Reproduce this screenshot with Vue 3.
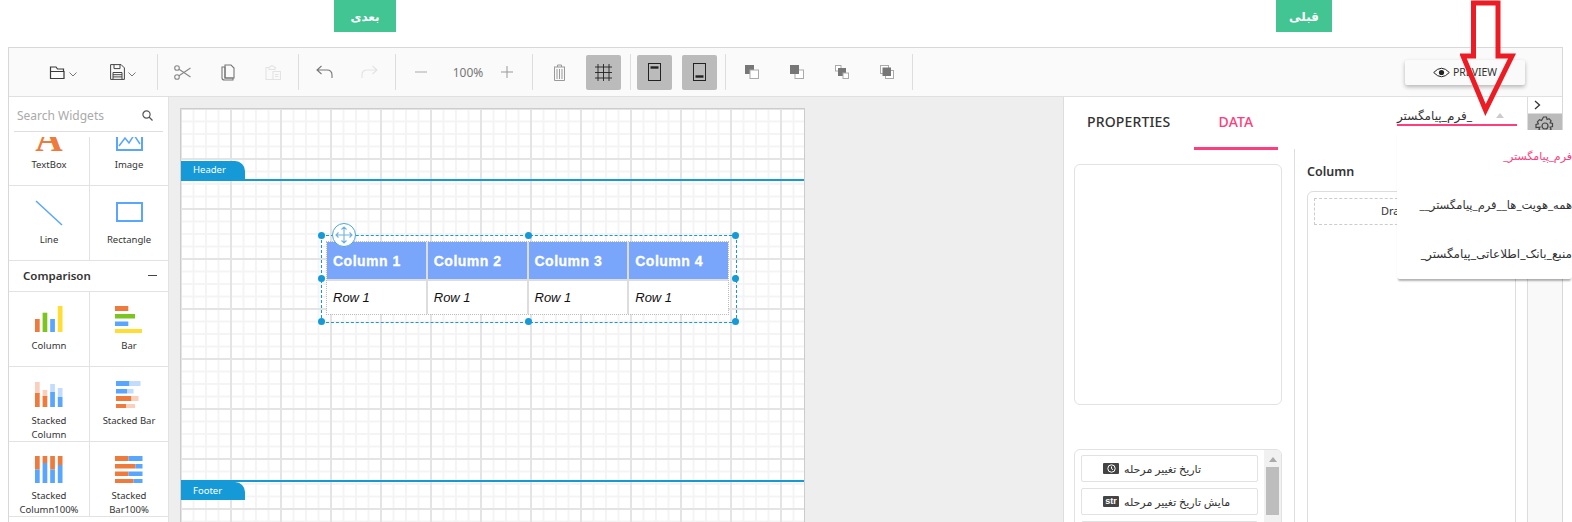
<script setup>
const O = '#ee7b3c', B = '#58a6ff', G = '#7cc520', Y = '#ffdd33', LO = '#f8d0bb', LB = '#c2dcff'
const r = (x, y, w, h, f) => ({ x, y, w, h, f })
const comparison = [
  { lines: ['Column'], w: 28, h: 26, rects: [r(0,13,4.7,13,O), r(7.6,6.7,4.7,19.3,G), r(15.2,13,4.7,13,B), r(22.8,0,4.7,26,Y)] },
  { lines: ['Bar'], w: 28, h: 27, rects: [r(0,0,13.3,5,O), r(0,8,20,4.5,G), r(0,15.5,13.3,4.5,B), r(0,23,27,4,Y)] },
  { lines: ['Stacked', 'Column'], w: 28, h: 26, rects: [r(0,1,4.7,12,LO), r(0,12,4.7,14,O), r(7.6,9,4.7,7,LO), r(7.6,15,4.7,11,O), r(15.2,3,4.7,8,LB), r(15.2,11,4.7,15,B), r(22.8,7,4.7,9,LB), r(22.8,16,4.7,10,B)] },
  { lines: ['Stacked Bar'], w: 26, h: 27, rects: [r(0,0,13.5,5,B), r(13.5,0,11,5,LB), r(0,8,11,4.5,B), r(11,8,6.5,4.5,LB), r(0,15,15.5,5,O), r(15.5,15,7,5,LO), r(0,23,10,4.5,O), r(10,23,9,4.5,LO)] },
  { lines: ['Stacked', 'Column100%'], w: 28, h: 27, rects: [r(0,0,4.7,13.5,O), r(0,13.5,4.7,13.5,B), r(7.6,0,4.7,7,O), r(7.6,7,4.7,20,B), r(15.2,0,4.7,13.5,O), r(15.2,13.5,4.7,13.5,B), r(22.8,0,4.7,9,O), r(22.8,9,4.7,18,B)] },
  { lines: ['Stacked', 'Bar100%'], w: 28, h: 27, rects: [r(0,0,13.5,5,O), r(13.5,0,14,5,B), r(0,8,20.5,4.5,O), r(20.5,8,7,4.5,B), r(0,15.5,13.5,4.5,O), r(13.5,15.5,14,4.5,B), r(0,23,18.5,4,O), r(18.5,23,9,4,B)] }
]
const columns = ['Column 1', 'Column 2', 'Column 3', 'Column 4']
const handles = [[0,0],[50,0],[100,0],[0,50],[100,50],[0,100],[50,100],[100,100]]
const handleStyle = ([x, y]) => ({ left: x + '%', top: y + '%' })
const stackIcons = ['front', 'back', 'forward', 'backward']
</script>

<template>
  <div class="page">
    <div class="nav">
      <div class="nav-btn next">بعدی</div>
      <div class="nav-btn prev">قبلی</div>
    </div>

    <div class="frame">
      <div class="toolbar">
        <div class="group g1">
          <button class="tool wide">
            <svg width="17" height="15" viewBox="0 0 17 15" fill="none" stroke="#3a3a3a" stroke-width="1.2"><path d="M1.500 13.500V2h5.500l1.500 2h6v2M1.500 6.500h13.500v7H1.500z"/></svg>
            <svg class="chev" width="8" height="5" viewBox="0 0 8 5" fill="none" stroke="#777"><path d="M.5.5 4 4 7.500.5"/></svg>
          </button>
          <button class="tool wide">
            <svg width="15" height="16" viewBox="0 0 15 16" fill="none" stroke="#444" stroke-width="1"><path d="M.6.6h10.500l3.300 3.300v11.500H.6z"/><path d="M4 .6v4h6v-4M3 8.500h9v7M3 8.500v7M3 10.700h9M3 12.900h9"/></svg>
            <svg class="chev" width="8" height="5" viewBox="0 0 8 5" fill="none" stroke="#777"><path d="M.5.5 4 4 7.500.5"/></svg>
          </button>
        </div>
        <i class="sep"></i>
        <div class="group g2">
          <button class="tool">
            <svg width="17" height="15" viewBox="0 0 17 15" fill="none" stroke="#888" stroke-width="1.100"><circle cx="3" cy="3" r="2.300"/><circle cx="3" cy="12" r="2.300"/><path d="M5 4.200 16.500 12M5 10.800 16.500 3"/></svg>
          </button>
          <button class="tool">
            <svg width="14" height="17" viewBox="0 0 14 17" fill="none" stroke="#777" stroke-width="1.100"><path d="M1 3h3v11h8v2H3.500Q1 16 1 14z"/><path d="M4 1h6l3 3v10H4z"/></svg>
          </button>
          <button class="tool">
            <svg width="16" height="15" viewBox="0 0 16 15" fill="none" stroke="#e3e3e3" stroke-width="1.100"><path d="M4 2.500H1v12h7M11 2.500h-1M4 2.500 7 .6l3 1.900v2H4zM8 6.500h7.500v8H8zM10 9.500h3.500M10 11.500h3.500"/></svg>
          </button>
        </div>
        <i class="sep"></i>
        <div class="group g3">
          <button class="tool">
            <svg width="17" height="14" viewBox="0 0 17 14" fill="none" stroke="#777" stroke-width="1.100"><path d="M5.500 1 1 5l4.500 4M1 5h10q5 0 5 5v3"/></svg>
          </button>
          <button class="tool">
            <svg width="17" height="14" viewBox="0 0 17 14" fill="none" stroke="#e3e3e3" stroke-width="1.100"><path d="M11.500 1 16 5l-4.500 4M16 5H6q-5 0-5 5v3"/></svg>
          </button>
        </div>
        <i class="sep"></i>
        <div class="group g4">
          <button class="tool minus">
            <svg width="12" height="2" viewBox="0 0 12 2"><path d="M0 1h12" stroke="#aaa"/></svg>
          </button>
          <span class="zoom-val">100%</span>
          <button class="tool plus">
            <svg width="12" height="12" viewBox="0 0 12 12" stroke="#999"><path d="M0 6h12M6 0v12" fill="none"/></svg>
          </button>
        </div>
        <i class="sep"></i>
        <div class="group g5">
          <button class="tool trash">
            <svg width="13" height="17" viewBox="0 0 13 17" fill="none" stroke="#999" stroke-width="1"><path d="M1 3h11M1.500 3v13.500h10V3M4.500 3V1h4v2M4 5v10M6.500 5v10M9 5v10"/></svg>
          </button>
          <button class="tool sq">
            <svg width="17" height="17" viewBox="0 0 17 17" fill="none" stroke="#222" stroke-width=".9"><path d="M0 3h17M0 8.500h17M0 14h17M3 0v17M8.500 0v17M14 0v17"/></svg>
          </button>
        </div>
        <i class="sep"></i>
        <div class="group g6">
          <button class="tool sq">
            <svg width="13" height="18" viewBox="0 0 13 18" fill="none" stroke="#222"><rect x=".5" y=".5" width="12" height="17"/><path d="M2.500 4.500h8" stroke-width="2.400"/></svg>
          </button>
          <button class="tool sq">
            <svg width="13" height="18" viewBox="0 0 13 18" fill="none" stroke="#222"><rect x=".5" y=".5" width="12" height="17"/><path d="M2.500 13.500h8" stroke-width="2.400"/></svg>
          </button>
        </div>
        <i class="sep"></i>
        <div class="group g7">
          <button v-for="k in stackIcons" :key="k" class="tool">
            <svg width="14" height="14" viewBox="0 0 14 14">
              <template v-if="k === 'front'"><rect x="0" y="0" width="9" height="9" fill="#777"/><rect x="5" y="5" width="8.500" height="8.500" fill="#fff" stroke="#aaa"/></template>
              <template v-else-if="k === 'back'"><rect x="5" y="5" width="8.500" height="8.500" fill="#fff" stroke="#aaa"/><rect x="0" y="0" width="9" height="9" fill="#777"/></template>
              <template v-else-if="k === 'forward'"><rect x=".5" y=".5" width="5.500" height="5.500" fill="#fff" stroke="#aaa"/><rect x="3" y="3" width="8" height="8" fill="#777"/><rect x="8" y="8" width="5.500" height="5.500" fill="#fff" stroke="#aaa"/></template>
              <template v-else><rect x=".5" y=".5" width="8" height="8" fill="#fff" stroke="#aaa"/><rect x="5.500" y="5.500" width="8" height="8" fill="#fff" stroke="#aaa"/><rect x="2.500" y="2.500" width="8.500" height="8.500" fill="#777"/></template>
            </svg>
          </button>
        </div>
        <i class="sep"></i>
        <button class="preview">
          <svg width="17" height="11" viewBox="0 0 17 11"><path d="M.7 5.500Q8.500-3 16.300 5.500 8.500 14 .7 5.500z" fill="none" stroke="#222"/><circle cx="8.500" cy="5.500" r="2.600" fill="#222"/></svg>
          <span>PREVIEW</span>
        </button>
      </div>

      <div class="main">
        <aside class="sidebar">
          <div class="search">
            <span>Search Widgets</span>
            <svg width="11" height="11" viewBox="0 0 11 11" fill="none" stroke="#555" stroke-width="1.200"><circle cx="4.500" cy="4.500" r="3.600"/><path d="m7 7 3.500 3.500"/></svg>
          </div>
          <div class="scroller">
            <div class="scroll-inner">
              <div class="cells">
                <div class="cell">
                  <div class="icon-a">A</div>
                  <div class="cell-label">TextBox</div>
                </div>
                <div class="cell">
                  <svg class="icon" width="27" height="26" viewBox="0 0 27 26" fill="none"><path d="M1 1v24h25V1" stroke="#58a6ff" stroke-width="2"/><path d="M3 21 9 13l4 5 5-8 6 9" stroke="#58a6ff" stroke-width="1.500"/><circle cx="20" cy="9" r="2.500" fill="#ee7b3c"/></svg>
                  <div class="cell-label">Image</div>
                </div>
                <div class="cell">
                  <svg class="icon" width="28" height="26" viewBox="0 0 28 26"><path d="M1 1 27 25" stroke="#58a6ff" stroke-width="1.500"/></svg>
                  <div class="cell-label">Line</div>
                </div>
                <div class="cell">
                  <svg class="icon" width="27" height="26" viewBox="0 0 27 26" fill="none"><rect x="1" y="3" width="25" height="18" stroke="#58a6ff" stroke-width="2"/></svg>
                  <div class="cell-label">Rectangle</div>
                </div>
              </div>
              <div class="cat"><span>Comparison</span><i></i></div>
              <div class="cells">
                <div v-for="c in comparison" :key="c.lines.join()" class="cell">
                  <div class="icon-box">
                    <svg :width="c.w" :height="c.h" :viewBox="`0 0 ${c.w} ${c.h}`"><rect v-for="(q, i) in c.rects" :key="i" :x="q.x" :y="q.y" :width="q.w" :height="q.h" :fill="q.f"/></svg>
                  </div>
                  <div v-for="l in c.lines" :key="l" class="cell-label">{{ l }}</div>
                </div>
              </div>
            </div>
          </div>
        </aside>

        <section class="canvas">
          <div class="paper">
            <div class="band head"><span class="band-tab">Header</span></div>
            <div class="band-body">
              <div class="selection">
                <div class="rtable">
                  <div v-for="c in columns" :key="c" class="th">{{ c }}</div>
                  <div v-for="c in columns" :key="c + 'r'" class="td">Row 1</div>
                </div>
                <i v-for="(h, i) in handles" :key="i" class="handle" :style="handleStyle(h)"></i>
                <div class="move">
                  <svg width="18" height="18" viewBox="0 0 18 18" fill="none" stroke="#6fb1dd" stroke-width="1.100"><path d="M1 9h16M9 1v16M3.500 6.500 1 9l2.500 2.500M14.500 6.500 17 9l-2.500 2.500M6.500 3.500 9 1l2.500 2.500M6.500 14.500 9 17l2.500-2.500"/></svg>
                </div>
              </div>
            </div>
            <div class="band foot"><span class="band-tab">Footer</span></div>
          </div>
        </section>

        <section class="panel">
          <div class="tabs">
            <div class="tab props">PROPERTIES</div>
            <div class="tab data">DATA</div>
            <div class="select">
              <span dir="rtl">_فرم_پیامگستر</span>
              <svg width="8" height="5" viewBox="0 0 8 5"><path d="M0 5 4 0l4 5z" fill="#ccc"/></svg>
            </div>
          </div>
          <div class="panes">
            <div class="pane-left">
              <div class="tree"></div>
              <div class="fields">
                <div class="field-list">
                  <div class="field">
                    <span class="badge"><svg width="9" height="9" viewBox="0 0 9 9" fill="none" stroke="#fff"><circle cx="4.500" cy="4.500" r="3.700"/><path d="M4.500 2.500v2.200l1.500 1"/></svg></span>
                    <span dir="rtl">تاریخ تغییر مرحله</span>
                  </div>
                  <div class="field">
                    <span class="badge">str</span>
                    <span dir="rtl">مایش تاریخ تغییر مرحله</span>
                  </div>
                  <div class="field"></div>
                </div>
                <div class="scrollbar"><i class="up"></i><i class="thumb"></i></div>
              </div>
            </div>
            <div class="pane-right">
              <div class="col-title">Column</div>
              <div class="col-box"><div class="drop">Dra</div></div>
            </div>
          </div>
        </section>

        <aside class="rail">
          <div class="rail-top">
            <svg width="7" height="10" viewBox="0 0 7 10" fill="none" stroke="#333" stroke-width="1.300"><path d="m1 1 4.500 4L1 9"/></svg>
          </div>
          <div class="rail-gear">
            <svg width="20" height="20" viewBox="0 0 20 20" fill="none" stroke="#444" stroke-width="1.200"><circle cx="10" cy="10" r="3"/><path d="M8.500 1h3l.5 2.500 2-.8 2.100 2.100-1 2 2.400.700v3l-2.400.700 1 2-2.100 2.100-2-1-.5 2.600h-3l-.5-2.600-2 1-2.100-2.100 1-2L1 11.500v-3l2.400-.7-1-2 2.100-2.100 2 .8z"/></svg>
          </div>
        </aside>
      </div>
    </div>

    <div class="popup" dir="rtl">
      <div class="opt active">فرم_پیامگستر_</div>
      <div class="opt tight">همه_هویت_ها__فرم_پیامگستر__</div>
      <div class="opt">منبع_بانک_اطلاعاتی_پیامگستر_</div>
    </div>

    <svg class="arrow" width="56" height="116" viewBox="0 0 56 116" fill="none">
      <path d="M13.500 3h24.500v53h14L25.500 110 3 56h10.500z" stroke="#ed1c24" stroke-width="5"/>
    </svg>
  </div>
</template>

<style>
html, body { margin: 0; overflow: hidden; background: #fff; }
</style>

<style scoped>
.page { position: relative; width: 1572px; height: 522px; overflow: hidden; background: #fff; font-family: "Noto Sans", "DejaVu Sans", sans-serif; color: #333; }
.nav { display: flex; justify-content: space-between; height: 32px; padding: 0 240px 0 334px; }
.nav-btn { height: 32px; background: #43c593; color: #fff; font-size: 12px; font-weight: 700; display: flex; align-items: center; justify-content: center; }
.next { width: 62px; }
.prev { width: 56px; }

.frame { margin: 15px 9px 0 8px; height: 475px; border: 1px solid #d8d8d8; border-bottom: 0; display: flex; flex-direction: column; }
.toolbar { height: 48px; flex: none; background: #fafafa; border-bottom: 1px solid #e0e0e0; display: flex; align-items: center; }
.group { display: flex; align-items: center; height: 36px; }
.sep { width: 1px; height: 36px; background: #ddd; flex: none; }
.tool { border: 0; background: none; padding: 0; width: 45px; height: 35px; display: flex; align-items: center; justify-content: center; flex: none; }
.tool.wide { width: 60px; gap: 3px; }
.chev { margin-top: 5px; }
.g1 { width: 148px; padding-left: 24px; box-sizing: border-box; }
.g2 { width: 140px; padding-left: 2px; box-sizing: border-box; }
.g3 { width: 96px; padding-left: 3px; box-sizing: border-box; }
.g4 { width: 136px; padding-left: 10px; box-sizing: border-box; }
.g5 { width: 97px; padding-left: 3px; box-sizing: border-box; gap: 4px; }
.g6 { width: 94px; padding-left: 6px; box-sizing: border-box; gap: 10px; }
.g7 { width: 186px; padding-left: 3px; box-sizing: border-box; }
.tool.minus { width: 30px; }
.tool.plus { width: 14px; }
.zoom-val { width: 64px; text-align: center; font-size: 12px; color: #777; }
.tool.trash { width: 46px; }
.tool.sq { width: 35px; background: #bbb; border-radius: 2px; }
.preview { margin-left: auto; margin-right: 37px; width: 120px; height: 25px; background: #fafafa; border: 0; border-radius: 2px; box-shadow: 0 2px 4px rgba(0, 0, 0, .28); display: flex; align-items: center; justify-content: center; gap: 3px; font: 10.500px "Noto Sans", sans-serif; color: #333; }

.main { flex: 1; display: flex; min-height: 0; }
.sidebar { width: 160px; flex: none; box-sizing: border-box; border-right: 1px solid #e2e2e2; background: #fff; display: flex; flex-direction: column; }
.search { height: 35px; margin: 0 5px 5px; padding: 3px 10px 0 3px; box-sizing: border-box; border-bottom: 1px solid #ddd; flex: none; display: flex; align-items: center; justify-content: space-between; font-size: 12px; color: #aaa; }
.scroller { flex: 1; overflow: hidden; }
.scroll-inner { margin-top: -26px; }
.cells { display: grid; grid-template-columns: 81px 78px; }
.cell { height: 75px; box-sizing: border-box; border-bottom: 1px solid #e2e2e2; padding-top: 14px; display: flex; flex-direction: column; align-items: center; overflow: hidden; }
.cell:nth-child(odd) { border-right: 1px solid #e2e2e2; }
.icon, .icon-box { height: 26px; flex: none; margin-bottom: 7px; display: block; }
.icon-box { height: 27px; margin-bottom: 6px; }
.icon-box svg { display: block; }
.icon-a { height: 26px; margin-bottom: 7px; font: 700 38px/26px "Liberation Serif", serif; color: #ee7b3c; }
.cell-label { font-size: 9.500px; line-height: 14px; color: #333; white-space: nowrap; }
.cat { height: 31px; box-sizing: border-box; border-bottom: 1px solid #e2e2e2; padding: 0 11px 2px 14px; display: flex; align-items: center; justify-content: space-between; font-size: 11.500px; font-weight: 600; color: #333; }
.cat i { width: 9px; height: 1px; background: #444; }

.canvas { flex: 1; min-width: 0; background: #eee; padding: 11px 0 0 11px; }
.paper { width: 625px; height: 420px; box-sizing: border-box; border: 1px solid #ccc; border-bottom: 0; background-color: #fff;
  background-image: linear-gradient(90deg, #e4e4e4 2px, transparent 2px), linear-gradient(#e4e4e4 2px, transparent 2px), linear-gradient(90deg, #f4f4f4 1.500px, transparent 1.500px), linear-gradient(#f4f4f4 1.500px, transparent 1.500px);
  background-size: 50px 50px, 50px 50px, 12.500px 12.500px, 12.500px 12.500px;
  background-position: 49px 49px, 49px 49px, 49px 49px, 49px 49px; }
.band { position: relative; }
.band.head { height: 72px; border-bottom: 2px solid #159ad7; box-sizing: border-box; display: flex; align-items: flex-end; }
.band.foot { border-top: 2px solid #159ad7; margin-top: -1px; }
.band-tab { width: 64px; height: 18px; padding-left: 12px; box-sizing: border-box; background: #159ad7; color: #fff; font-size: 9.500px; line-height: 18px; display: block; border-top-right-radius: 10px; }
.band-body { height: 300px; position: relative; }
.selection { position: absolute; left: 140px; top: 54px; width: 416px; height: 88px; box-sizing: border-box; border: 1px dashed #159ad7; }
.rtable { position: absolute; left: 5px; top: 6px; width: 401px; height: 72px; display: grid; grid-template-columns: repeat(4, 1fr); grid-template-rows: 37px 1fr; gap: 2px; background: #ddd; outline: 1px dotted #bbb; font-family: "Liberation Sans", Arial, sans-serif; }
.th { background: #79a6fb; color: #fff; font-size: 14px; font-weight: 700; letter-spacing: .5px; -webkit-text-stroke: .3px #fff; display: flex; align-items: center; padding-left: 6px; }
.td { background: #fff; font-size: 13px; font-style: italic; color: #111; display: flex; align-items: center; padding-left: 6px; }
.handle { position: absolute; width: 7px; height: 7px; margin: -4px 0 0 -4px; border-radius: 50%; background: #159ad7; }
.move { position: absolute; left: 10px; top: -13px; width: 24px; height: 24px; box-sizing: border-box; border: 1px solid #4aa5da; border-radius: 50%; background: #fff; display: flex; align-items: center; justify-content: center; }

.panel { width: 464px; flex: none; box-sizing: border-box; border-left: 1px solid #ddd; background: #fff; display: flex; flex-direction: column; }
.tabs { height: 52px; flex: none; display: flex; padding-left: 23px; }
.tab { font-size: 14px; font-weight: 500; letter-spacing: .15px; line-height: 50px; box-sizing: border-box; height: 53px; }
.tab.props { width: 107px; color: #333; }
.tab.data { width: 84px; text-align: center; color: #ff3c7c; border-bottom: 3px solid #ff3c7c; }
.select { margin: 10px 0 0 119px; width: 120px; height: 19px; box-sizing: border-box; border-bottom: 2px solid #ff3c7c; display: flex; align-items: center; justify-content: space-between; font-size: 12px; color: #333; line-height: 17px; padding-right: 13px; white-space: nowrap; }
.panes { flex: 1; display: flex; min-height: 0; }
.pane-left { width: 230px; flex: none; box-sizing: border-box; padding: 15px 0 0 10px; }
.tree { width: 208px; height: 241px; box-sizing: border-box; border: 1px solid #e2e2e2; border-radius: 6px; }
.fields { width: 208px; height: 120px; margin-top: 44px; box-sizing: border-box; border: 1px solid #e2e2e2; border-radius: 6px 6px 0 0; display: flex; justify-content: space-between; overflow: hidden; }
.field-list { padding: 5px 0 0 6px; }
.field { width: 177px; height: 27px; box-sizing: border-box; border: 1px solid #e2e2e2; border-radius: 2px; margin-bottom: 6px; padding-left: 21px; display: flex; align-items: center; gap: 5px; font-size: 11px; color: #333; }
.badge { width: 16px; height: 11px; background: #444; color: #fff; border-radius: 1px; display: flex; align-items: center; justify-content: center; font: 700 9px/11px "Liberation Sans", sans-serif; }
.scrollbar { width: 17px; background: #f1f1f1; display: flex; flex-direction: column; align-items: center; }
.up { width: 0; height: 0; margin: 7px 0 5px; border: 4px solid transparent; border-top: 0; border-bottom: 5px solid #aaa; }
.thumb { width: 13px; height: 48px; background: #bdbdbd; }
.pane-right { flex: 1; border-left: 1px solid #ddd; padding: 14px 0 0 12px; }
.col-title { font-size: 12.500px; font-weight: 600; line-height: 18px; color: #333; }
.col-box { width: 209px; height: 340px; margin-top: 10px; box-sizing: border-box; border: 1px solid #ddd; border-radius: 6px 6px 0 0; padding: 6px; }
.drop { height: 27px; width: 190px; box-sizing: border-box; border: 1px dashed #ccc; padding-left: 66px; font-size: 11px; line-height: 24px; color: #333; }

.rail { width: 35px; flex: none; box-sizing: border-box; border-left: 1px solid #ddd; background: #f9f9f9; }
.rail-top { height: 16px; background: #fff; border-bottom: 1px solid #ddd; display: flex; align-items: center; padding-left: 6px; }
.rail-gear { height: 40px; background: #bbb; display: flex; justify-content: center; padding-top: 2px; box-sizing: border-box; }

.popup { position: absolute; left: 1397px; top: 130px; width: 175px; height: 149px; box-sizing: border-box; background: #fff; border-radius: 3px; box-shadow: 0 3px 2px -1px rgba(0, 0, 0, .3); padding-top: 1px; font-size: 12px; color: #333; }
.opt { height: 49px; display: flex; align-items: center; white-space: nowrap; }
.opt.active { color: #ff3c7c; font-size: 11px; }
.opt.tight { font-size: 11.500px; }
.arrow { position: absolute; left: 1460px; top: 0; }
</style>
